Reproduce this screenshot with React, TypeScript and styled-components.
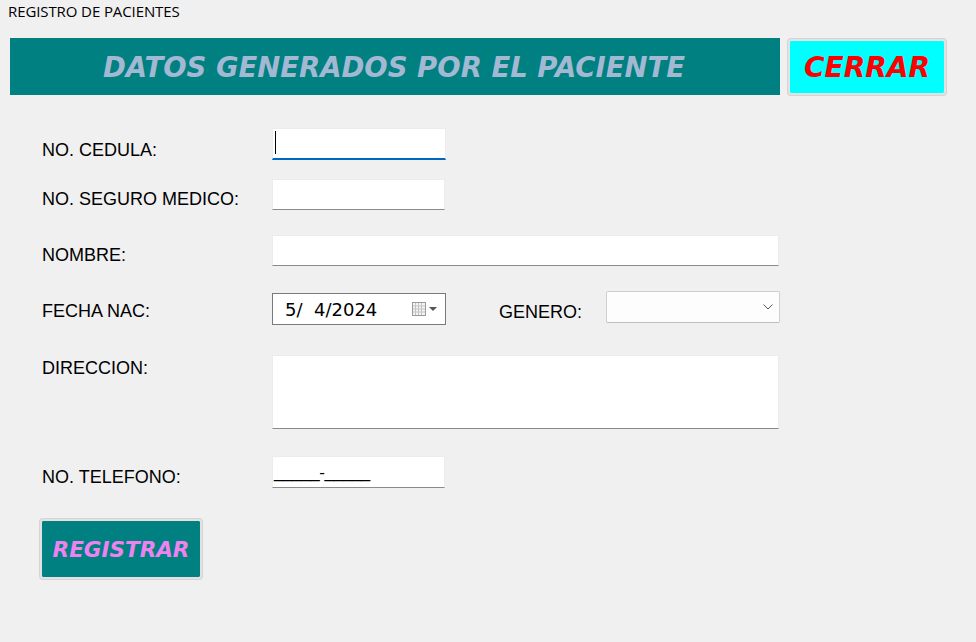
import React from "react";
import styled, { createGlobalStyle } from "styled-components";

const Global = createGlobalStyle`
  html, body { margin: 0; padding: 0; background: #f0f0f0; }
  body { width: 976px; height: 642px; overflow: hidden; }
  * { box-sizing: border-box; }
`;

const Window = styled.div`
  width: 976px;
  height: 642px;
  background: #f0f0f0;
  display: flex;
  flex-direction: column;
  font-family: "Liberation Sans", Arial, sans-serif;
  color: #000;
`;

const Caption = styled.div`
  height: 38px;
  padding: 1px 0 0 8px;
  font-family: "Open Sans", "Noto Sans", sans-serif;
  font-size: 15px;
  line-height: 20px;
  letter-spacing: -0.1px;
`;

const HeaderRow = styled.div`
  display: flex;
  align-items: flex-start;
  gap: 8px;
  padding-left: 10px;
`;

const Banner = styled.div`
  width: 770px;
  height: 57px;
  background: #008080;
  display: flex;
  align-items: center;
  justify-content: center;
  color: #a3b9d3;
  font-family: "DejaVu Sans", Verdana, sans-serif;
  font-weight: bold;
  font-style: italic;
  font-size: 27.5px;
  padding-right: 2px;
`;

const ActionButton = styled.button<{ $bg: string; $fg: string; $w: number; $h: number; $size: number }>`
  width: ${(p) => p.$w}px;
  height: ${(p) => p.$h}px;
  margin-top: 1px;
  padding: 0;
  border: 2px solid #e2e2e2;
  border-radius: 3px;
  background: ${(p) => p.$bg};
  background-clip: padding-box;
  color: ${(p) => p.$fg};
  font-family: "DejaVu Sans", Verdana, sans-serif;
  font-weight: bold;
  font-style: italic;
  font-size: ${(p) => p.$size}px;
  display: flex;
  align-items: center;
  justify-content: center;
  box-shadow: 0 0 0 1px #d4d4d4;
`;

const Form = styled.div`
  display: flex;
  flex-direction: column;
  padding-left: 42px;
`;

const Row = styled.div<{ $top: number }>`
  display: flex;
  align-items: flex-start;
  margin-top: ${(p) => p.$top}px;
`;

const Label = styled.div<{ $w: number; $offset: number; $gap?: number }>`
  width: ${(p) => p.$w}px;
  margin-left: ${(p) => p.$gap ?? 0}px;
  padding-top: ${(p) => p.$offset}px;
  font-size: 18px;
  line-height: 20px;
  white-space: nowrap;
`;

const TextBox = styled.div<{ $w: number; $h: number; $focus?: boolean }>`
  position: relative;
  width: ${(p) => p.$w}px;
  height: ${(p) => p.$h}px;
  background: #fff;
  border: 1px solid #ececec;
  border-bottom: ${(p) => (p.$focus ? "2px solid #0067c0" : "1px solid #8a8a8a")};
`;

const Caret = styled.div`
  position: absolute;
  left: 2px;
  top: 2px;
  width: 1px;
  height: 23px;
  background: #000;
`;

const DateBox = styled.div`
  margin-top: 2px;
  width: 174px;
  height: 32px;
  background: #fff;
  border: 1px solid #7a7a7a;
  display: flex;
  align-items: center;
  padding-left: 12px;
  font-family: "DejaVu Sans", Verdana, sans-serif;
  font-size: 18px;
  white-space: pre;
`;

const DateIcon = styled.svg`
  margin-left: auto;
  margin-right: 7px;
`;

const ComboBox = styled.div`
  width: 174px;
  height: 32px;
  background: #fdfdfd;
  border: 1px solid #cfcfcf;
  border-bottom-color: #bdbdbd;
  border-radius: 2px;
  display: flex;
  align-items: center;
  justify-content: flex-end;
  padding-right: 6px;
`;

const Mask = styled.div`
  padding: 6px 0 0 1px;
  font-family: "Liberation Sans", Arial, sans-serif;
  font-size: 17px;
  line-height: 20px;
  white-space: pre;
  letter-spacing: -0.4px;
`;

const ButtonRow = styled.div`
  margin-top: 30px;
  margin-left: -2px;
`;

export default function App() {
  return (
    <>
      <Global />
      <Window>
        <Caption>REGISTRO DE PACIENTES</Caption>
        <HeaderRow>
          <Banner>DATOS GENERADOS POR EL PACIENTE</Banner>
          <ActionButton $bg="#00ffff" $fg="#ff0000" $w={158} $h={56} $size={28}>
            CERRAR
          </ActionButton>
        </HeaderRow>
        <Form>
          <Row $top={33}>
            <Label $w={230} $offset={12}>NO. CEDULA:</Label>
            <TextBox $w={174} $h={32} $focus>
              <Caret />
            </TextBox>
          </Row>
          <Row $top={19}>
            <Label $w={230} $offset={10}>NO. SEGURO MEDICO:</Label>
            <TextBox $w={173} $h={31} />
          </Row>
          <Row $top={25}>
            <Label $w={230} $offset={10}>NOMBRE:</Label>
            <TextBox $w={507} $h={31} />
          </Row>
          <Row $top={25}>
            <Label $w={230} $offset={10}>FECHA NAC:</Label>
            <DateBox>
              {"5/  4/2024"}
              <DateIcon width="26" height="16" viewBox="0 0 26 16">
                <rect x="0.5" y="1.5" width="13" height="13" fill="#f4f4f4" stroke="#9a9a9a" />
                <path d="M0.5 5h13M0.5 8h13M0.5 11h13M3.5 1.5v13M6.5 1.5v13M9.5 1.5v13" stroke="#c4c4c4" strokeWidth="1" />
                <rect x="0.5" y="1.5" width="13" height="13" fill="none" stroke="#9a9a9a" />
                <path d="M17 6h8l-4 4z" fill="#555" />
              </DateIcon>
            </DateBox>
            <Label $w={107} $offset={11} $gap={53}>GENERO:</Label>
            <ComboBox>
              <svg width="10" height="6" viewBox="0 0 10 6">
                <path d="M0.5 0.5 L5 5 L9.5 0.5" fill="none" stroke="#555" strokeWidth="1" />
              </svg>
            </ComboBox>
          </Row>
          <Row $top={30}>
            <Label $w={230} $offset={3}>DIRECCION:</Label>
            <TextBox $w={507} $h={74} />
          </Row>
          <Row $top={27}>
            <Label $w={230} $offset={11}>NO. TELEFONO:</Label>
            <TextBox $w={173} $h={32}>
              <Mask>{"_____-_____"}</Mask>
            </TextBox>
          </Row>
          <ButtonRow>
            <ActionButton $bg="#008080" $fg="#ee82ee" $w={162} $h={60} $size={21.5}>
              REGISTRAR
            </ActionButton>
          </ButtonRow>
        </Form>
      </Window>
    </>
  );
}
